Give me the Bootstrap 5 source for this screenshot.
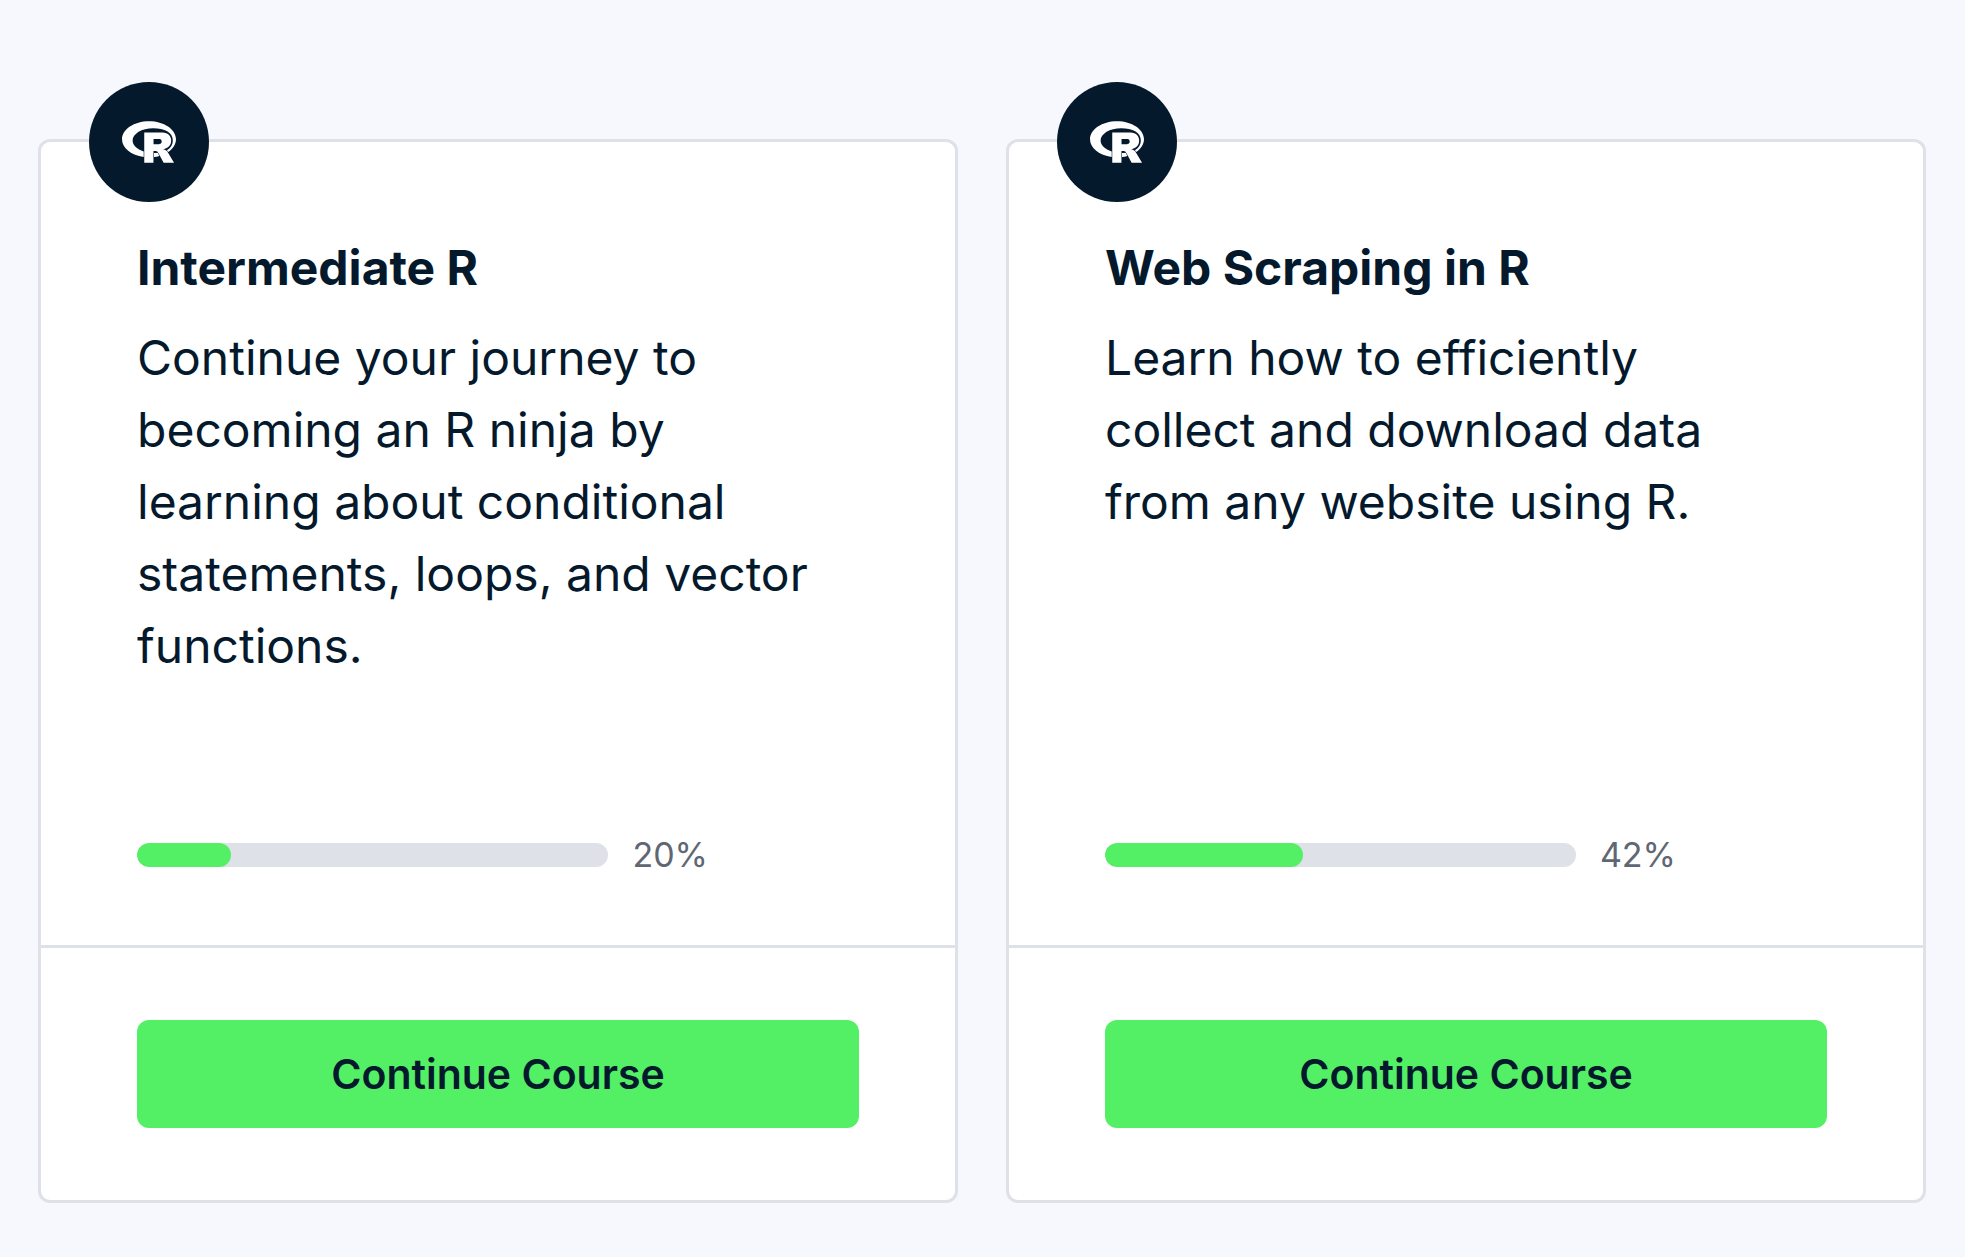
<!DOCTYPE html>
<html lang="en">
<head>
<meta charset="utf-8">
<meta name="viewport" content="width=device-width, initial-scale=1">
<title>Courses in progress</title>
<link href="https://cdn.jsdelivr.net/npm/bootstrap@5.3.0/dist/css/bootstrap.min.css" rel="stylesheet">
<style>
body { background: #f7f7fe; color: #05192d; font-family: Inter, "Liberation Sans", sans-serif; }
.course-list { padding: 139px 39px 53px 38px; }
.course-row { --bs-gutter-x: 48px; --bs-gutter-y: 96px; }
.course-card { --bs-card-border-width: 3px; --bs-card-border-color: #dfe1e8; --bs-card-border-radius: 12px; --bs-card-inner-border-radius: 9px; --bs-card-bg: #fff; color: #05192d; }
.course-badge { top: -60px; left: 48px; width: 120px; height: 120px; background: #05192d; color: #fff; }
.course-badge svg { width: 54px; height: 54px; }
.course-main { padding: 96px 96px 72px; }
.course-title { font-size: 48px; line-height: 60px; font-weight: 700; margin-bottom: 24px; }
.course-text { font-size: 48px; line-height: 72px; max-width: 684px; margin-bottom: 155px; }
.course-status { max-width: 571px; gap: 24px; }
.course-status .progress { --bs-progress-height: 24px; --bs-progress-bg: #dfe1e8; --bs-progress-bar-bg: #53ef65; --bs-progress-border-radius: 12px; }
.course-status .progress-bar { border-radius: 12px; }
.course-percent { font-size: 34px; line-height: 36px; color: #5e6773; }
.course-foot { padding: 72px 96px; background: transparent; border-top: 3px solid #dfe1e8; }
.btn-course { --bs-btn-bg: #53ef65; --bs-btn-color: #05192d; --bs-btn-hover-bg: #40dc52; --bs-btn-hover-color: #05192d; --bs-btn-active-bg: #34c746; --bs-btn-border-width: 0; --bs-btn-border-radius: 12px; --bs-btn-padding-y: 24px; --bs-btn-font-size: 41px; --bs-btn-line-height: 60px; --bs-btn-font-weight: 600; }
</style>
</head>
<body>
<svg class="d-none" xmlns="http://www.w3.org/2000/svg">
  <symbol id="r-logo" viewBox="0 0 24 24">
    <path fill="currentColor" d="M12 2.746c-6.627 0-12 3.599-12 8.037 0 3.897 4.144 7.144 9.64 7.88V16.26c-2.924-.915-4.925-2.755-4.925-4.877 0-3.035 4.084-5.494 9.12-5.494 5.038 0 8.757 1.683 8.757 5.494 0 1.976-.999 3.379-2.662 4.272.09.066.174.128.258.216.169.149.25.363.372.544 2.128-1.45 3.44-3.437 3.44-5.631 0-4.44-5.373-8.038-12-8.038zm-2.111 4.99v13.516l4.093-.002-.002-5.291h1.1c.225 0 .321.066.549.25.272.22.715.982.715.982l2.164 4.063 4.627-.002-2.864-4.826s-.086-.193-.265-.383a2.22 2.22 0 00-.582-.416c-.422-.214-1.149-.434-1.149-.434s3.578-.264 3.578-3.826c0-3.562-3.744-3.63-3.744-3.63zm4.127 2.93l2.478.002s1.149-.062 1.149 1.125c0 1.165-1.149 1.17-1.149 1.17h-2.478zm1.754 6.119c-.494.049-1.012.079-1.54.088v1.807a16.622 16.622 0 002.37-.473l-.471-.891s-.108-.183-.248-.394c-.039-.054-.08-.098-.111-.137z"/>
  </symbol>
</svg>
<main class="container-fluid course-list">
  <div class="row row-cols-1 row-cols-lg-2 course-row mt-0">
    <div class="col mt-0">
      <article class="card course-card h-100">
        <div class="course-badge position-absolute rounded-circle d-flex align-items-center justify-content-center">
          <svg role="img" aria-label="R"><use href="#r-logo"/></svg>
        </div>
        <div class="card-body course-main d-flex flex-column">
          <h2 class="course-title">Intermediate R</h2>
          <p class="course-text">Continue your journey to becoming an R ninja by learning about conditional statements, loops, and vector functions.</p>
          <div class="course-status d-flex align-items-center mt-auto">
            <div class="progress flex-grow-1" role="progressbar" aria-label="Intermediate R progress" aria-valuenow="20" aria-valuemin="0" aria-valuemax="100">
              <div class="progress-bar" style="width: 20%"></div>
            </div>
            <span class="course-percent">20%</span>
          </div>
        </div>
        <div class="card-footer course-foot">
          <button type="button" class="btn btn-course w-100">Continue Course</button>
        </div>
      </article>
    </div>
    <div class="col mt-0">
      <article class="card course-card h-100">
        <div class="course-badge position-absolute rounded-circle d-flex align-items-center justify-content-center">
          <svg role="img" aria-label="R"><use href="#r-logo"/></svg>
        </div>
        <div class="card-body course-main d-flex flex-column">
          <h2 class="course-title">Web Scraping in R</h2>
          <p class="course-text">Learn how to efficiently collect and download data from any website using R.</p>
          <div class="course-status d-flex align-items-center mt-auto">
            <div class="progress flex-grow-1" role="progressbar" aria-label="Web Scraping in R progress" aria-valuenow="42" aria-valuemin="0" aria-valuemax="100">
              <div class="progress-bar" style="width: 42%"></div>
            </div>
            <span class="course-percent">42%</span>
          </div>
        </div>
        <div class="card-footer course-foot">
          <button type="button" class="btn btn-course w-100">Continue Course</button>
        </div>
      </article>
    </div>
  </div>
</main>
<script src="https://cdn.jsdelivr.net/npm/bootstrap@5.3.0/dist/js/bootstrap.bundle.min.js"></script>
</body>
</html>
